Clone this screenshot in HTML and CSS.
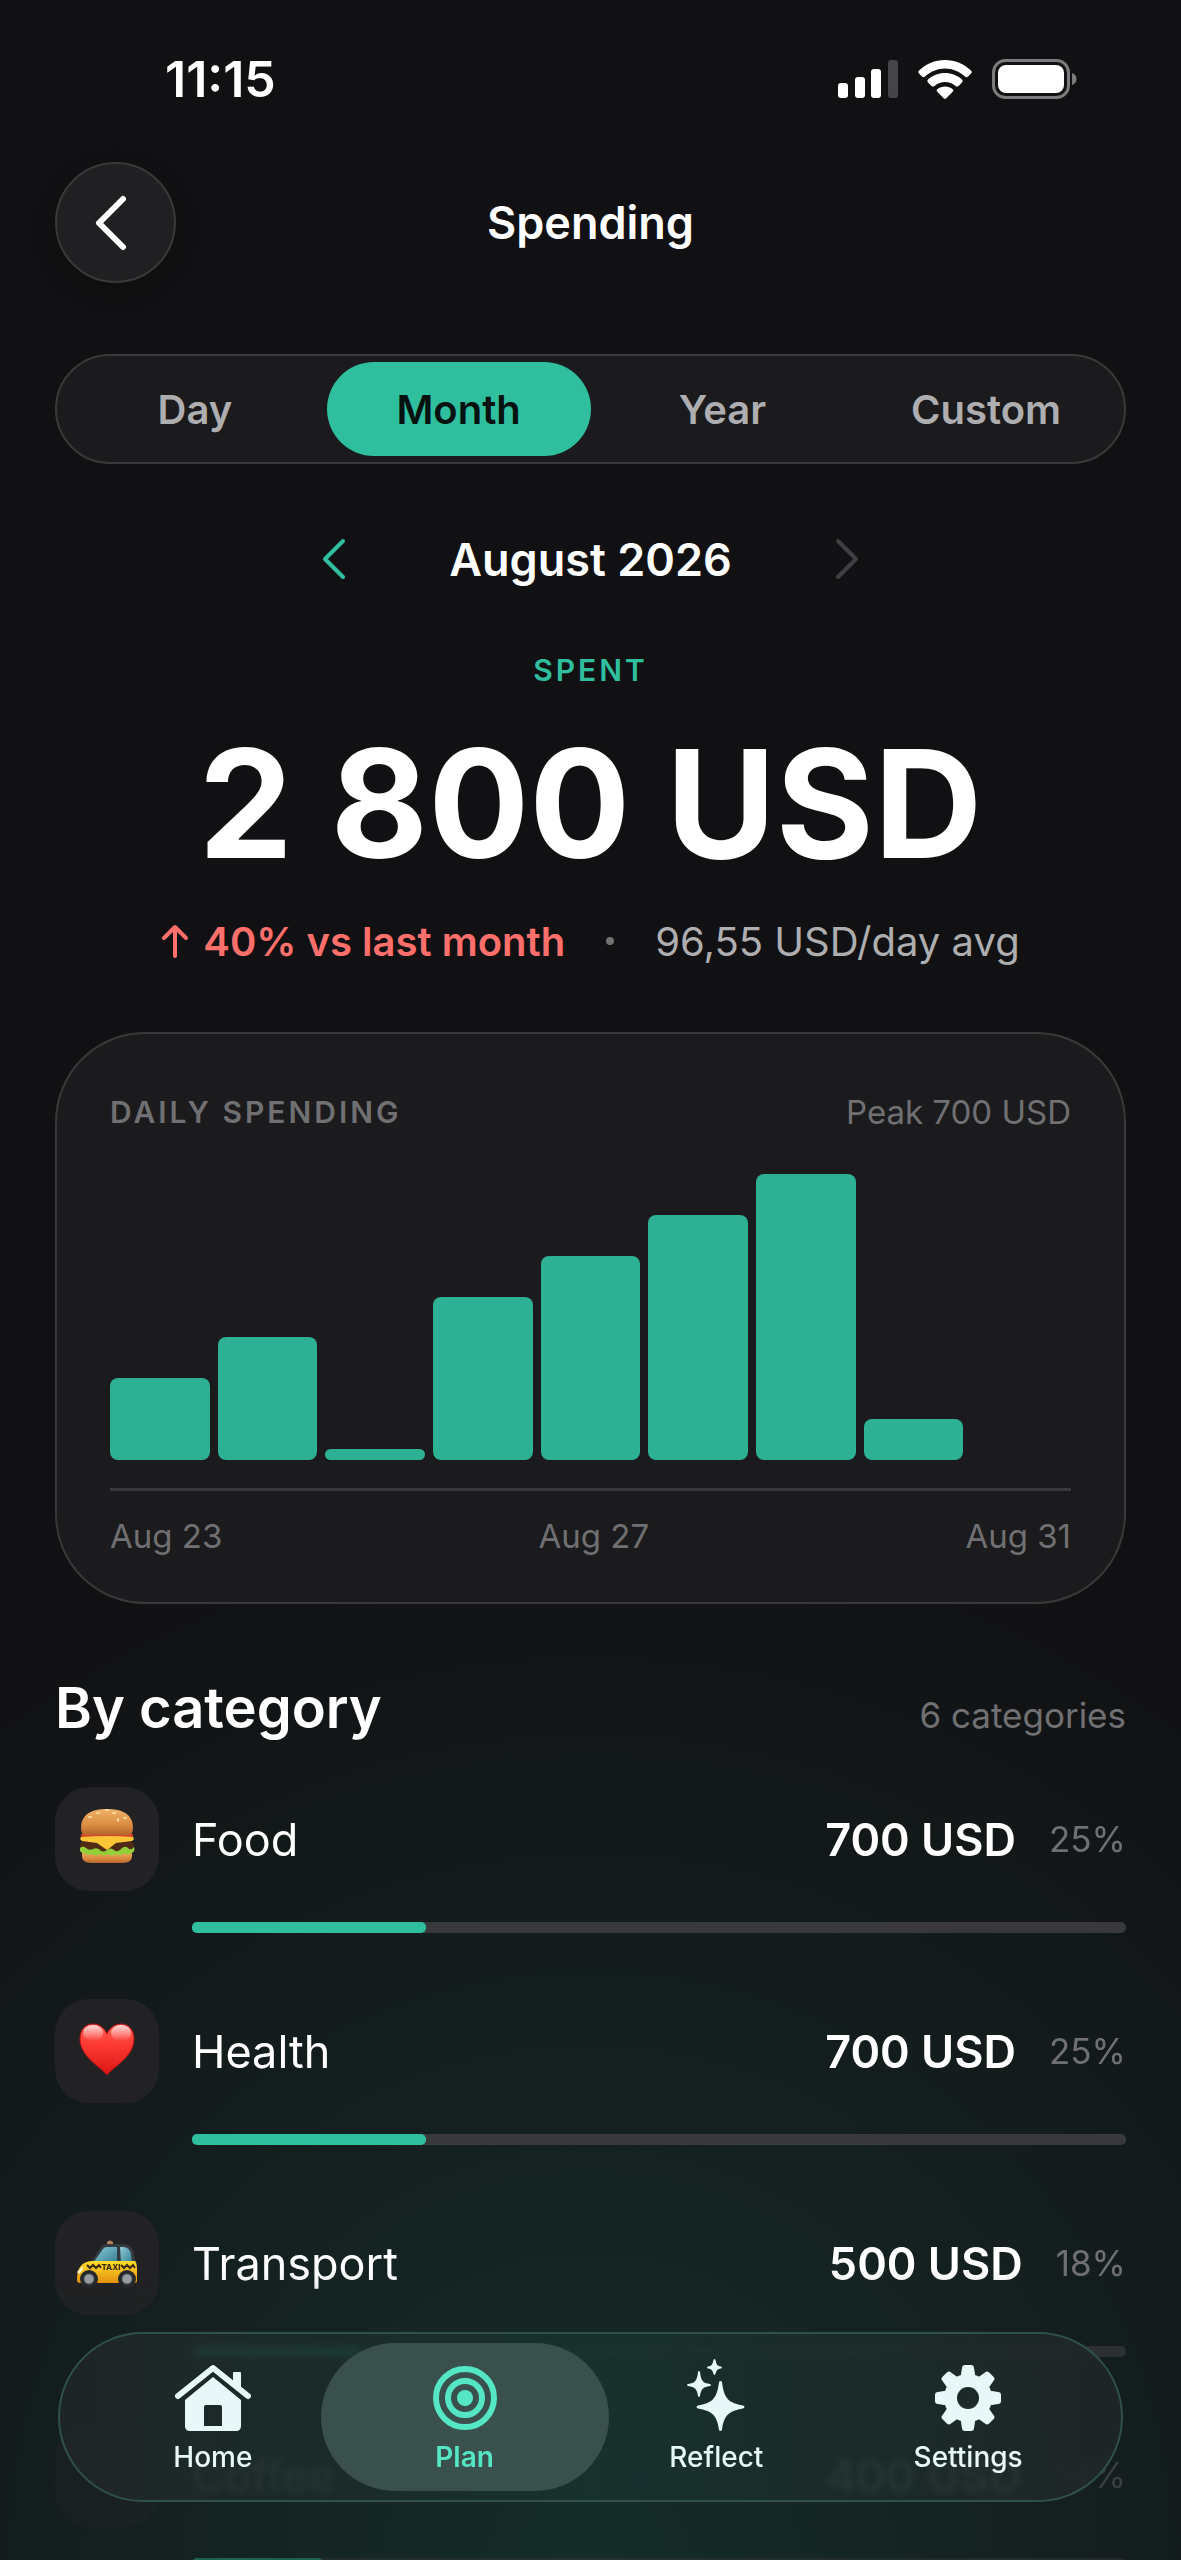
FILE: index.html
```html
<!DOCTYPE html>
<html lang="en">
<head>
    <meta charset="UTF-8">
    <meta name="viewport" content="width=device-width, initial-scale=1.0">
    <title>Spending</title>
    <link rel="stylesheet" href="styles.css">
</head>
<body>
    <div class="app">
        <div class="status-bar">
            <span class="time">11:15</span>
            <div class="status-icons">
                <svg width="60" height="38" viewBox="0 0 60 38" fill="#fff" aria-hidden="true">
                    <rect x="0" y="23" width="10" height="15" rx="3"/>
                    <rect x="17" y="17" width="10" height="21" rx="3"/>
                    <rect x="33" y="9" width="10" height="29" rx="3"/>
                    <rect x="50" y="0" width="10" height="38" rx="3" fill="#454547"/>
                </svg>
                <svg width="54" height="39" viewBox="0 0 54 39" fill="#fff" aria-hidden="true">
                    <path d="M27 0C37 0 46 4 53 10.500Q54.500 12 53 13.500L50 16.500Q48.500 18 47 16.500C41.500 11.500 34.500 8.500 27 8.500S12.500 11.500 7 16.500Q5.500 18 4 16.500L1 13.500Q-.5 12 1 10.500C8 4 17 0 27 0Z"/>
                    <path d="M27 13C33.500 13 39.500 15.500 44 19.500Q45.500 21 44 22.500L40.500 26Q39 27.200 37.500 26C34.500 23.500 31 22 27 22S19.500 23.500 16.500 26Q15 27.200 13.500 26L10 22.500Q8.500 21 10 19.500C14.500 15.500 20.500 13 27 13Z"/>
                    <path d="M27 26.500C30 26.500 32.500 27.500 34.700 29.300Q36 30.500 34.700 31.800L28.300 38.200Q27 39.400 25.700 38.200L19.300 31.800Q18 30.500 19.300 29.300C21.500 27.500 24 26.500 27 26.500Z"/>
                </svg>
                <svg width="86" height="40" viewBox="0 0 86 40" aria-hidden="true">
                    <rect x="1.500" y="1.500" width="75" height="37" rx="12" fill="none" stroke="#7b7b7d" stroke-width="3"/>
                    <rect x="6" y="6" width="66" height="28" rx="8" fill="#fff"/>
                    <path d="M80 14Q84.500 15.500 84.500 20T80 26Z" fill="#7b7b7d"/>
                </svg>
            </div>
        </div>

        <header class="top-bar">
            <button type="button" class="back-button" aria-label="Back">
                <svg width="34" height="56" viewBox="0 0 34 56" aria-hidden="true">
                    <path d="M29 4L5 28L29 52" fill="none" stroke="#fff" stroke-width="6" stroke-linecap="round" stroke-linejoin="round"/>
                </svg>
            </button>
            <h1 class="page-title">Spending</h1>
        </header>

        <main class="content">
            <div class="segmented">
                <button type="button" class="segment">Day</button>
                <button type="button" class="segment active">Month</button>
                <button type="button" class="segment">Year</button>
                <button type="button" class="segment">Custom</button>
            </div>

            <div class="period">
                <button type="button" class="period-arrow" aria-label="Previous month">
                    <svg width="26" height="42" viewBox="0 0 26 42" aria-hidden="true">
                        <path d="M22 3L4 21L22 39" fill="none" stroke="currentColor" stroke-width="4" stroke-linecap="round" stroke-linejoin="round"/>
                    </svg>
                </button>
                <span class="period-name">August 2026</span>
                <button type="button" class="period-arrow" aria-label="Next month" disabled>
                    <svg width="26" height="42" viewBox="0 0 26 42" aria-hidden="true">
                        <path d="M4 3L22 21L4 39" fill="none" stroke="currentColor" stroke-width="4" stroke-linecap="round" stroke-linejoin="round"/>
                    </svg>
                </button>
            </div>

            <section class="summary">
                <p class="summary-label">SPENT</p>
                <p class="summary-amount">2&#8197;800 USD</p>
                <div class="summary-details">
                    <span class="change">
                        <svg width="28" height="34" viewBox="0 0 28 34" aria-hidden="true">
                            <path d="M14 32V3M3 14L14 3L25 14" fill="none" stroke="currentColor" stroke-width="4" stroke-linecap="round" stroke-linejoin="round"/>
                        </svg>
                        40% vs last month
                    </span>
                    <span class="dot"></span>
                    <span class="average">96,55 USD/day avg</span>
                </div>
            </section>

            <section class="chart-card">
                <div class="chart-header">
                    <h2 class="chart-title">DAILY SPENDING</h2>
                    <span class="chart-peak">Peak 700 USD</span>
                </div>
                <div class="chart">
                    <div class="bar" style="height: 28.57%"></div>
                    <div class="bar" style="height: 42.86%"></div>
                    <div class="bar" style="height: 3.85%"></div>
                    <div class="bar" style="height: 57.14%"></div>
                    <div class="bar" style="height: 71.43%"></div>
                    <div class="bar" style="height: 85.71%"></div>
                    <div class="bar" style="height: 100%"></div>
                    <div class="bar" style="height: 14.29%"></div>
                    <div class="bar" style="height: 0%"></div>
                </div>
                <div class="chart-axis">
                    <span>Aug 23</span>
                    <span>Aug 27</span>
                    <span>Aug 31</span>
                </div>
            </section>

            <section class="categories">
                <div class="categories-header">
                    <h2 class="categories-title">By category</h2>
                    <span class="categories-count">6 categories</span>
                </div>
                <ul class="category-list">
                    <li class="category">
                        <div class="category-icon">
                            <svg width="58" height="58" viewBox="0 0 58 58" aria-hidden="true">
                                <defs>
                                    <linearGradient id="bun" x1="0" y1="0" x2="0" y2="1">
                                        <stop offset="0" stop-color="#f0b267"/>
                                        <stop offset=".6" stop-color="#db8d43"/>
                                        <stop offset="1" stop-color="#b5652a"/>
                                    </linearGradient>
                                </defs>
                                <path d="M4 43H54V48Q54 55 45 55H13Q4 55 4 48Z" fill="url(#bun)"/>
                                <rect x="2" y="33" width="54" height="11" rx="5" fill="#4f2a14"/>
                                <path d="M2 40Q5 37 8 40T15 41T22 42T29 42T36 42T43 41T50 40T56 39Q58 44 53 45Q50 48 46 45Q42 49 38 46Q34 49 30 46Q26 49 22 46Q18 49 14 46Q9 48 6 45Q1 45 2 40Z" fill="#93cf38"/>
                                <rect x="3" y="25" width="52" height="6" rx="3" fill="#d8432d"/>
                                <path d="M3 29Q29 27 55 29Q57 31 54 33L38 35L29 42L19 35L4 33Q1 31 3 29Z" fill="#fcc538"/>
                                <path d="M3 20C3 6 14 1 29 1S55 6 55 20Q55 27 50 27H8Q3 27 3 20Z" fill="url(#bun)"/>
                                <g fill="#fbe0a5">
                                    <ellipse cx="20" cy="5" rx="2" ry="1"/>
                                    <ellipse cx="29" cy="2" rx="2" ry="1"/>
                                    <ellipse cx="36" cy="5" rx="2" ry="1"/>
                                    <ellipse cx="40" cy="12" rx="1" ry="2"/>
                                    <ellipse cx="12" cy="9" rx="2" ry="1"/>
                                    <ellipse cx="47" cy="10" rx="2" ry="1"/>
                                </g>
                            </svg>
                        </div>
                        <span class="category-name">Food</span>
                        <span class="category-amount">700 USD</span>
                        <span class="category-share">25%</span>
                        <div class="track"><div class="fill" style="width: 25%"></div></div>
                    </li>
                    <li class="category">
                        <div class="category-icon">
                            <svg width="58" height="58" viewBox="0 0 58 58" aria-hidden="true">
                                <defs>
                                    <linearGradient id="heart" x1="0" y1="0" x2="0" y2="1">
                                        <stop offset="0" stop-color="#ff6258"/>
                                        <stop offset=".4" stop-color="#fd3a33"/>
                                        <stop offset="1" stop-color="#d91613"/>
                                    </linearGradient>
                                    <linearGradient id="shine" x1="0" y1="0" x2="0" y2="1">
                                        <stop offset="0" stop-color="#fff" stop-opacity=".75"/>
                                        <stop offset="1" stop-color="#fff" stop-opacity="0"/>
                                    </linearGradient>
                                </defs>
                                <path d="M29 55C23 47 2 37 2 19C2 9 8 4 15 4C22 4 27 9 29 14C31 9 36 4 43 4C50 4 56 9 56 19C56 37 35 47 29 55Z" fill="url(#heart)" stroke="#b81210"/>
                                <ellipse cx="15" cy="13" rx="10" ry="8" fill="url(#shine)"/>
                                <ellipse cx="43" cy="13" rx="10" ry="8" fill="url(#shine)"/>
                            </svg>
                        </div>
                        <span class="category-name">Health</span>
                        <span class="category-amount">700 USD</span>
                        <span class="category-share">25%</span>
                        <div class="track"><div class="fill" style="width: 25%"></div></div>
                    </li>
                    <li class="category">
                        <div class="category-icon">
                            <svg width="62" height="58" viewBox="0 0 62 58" aria-hidden="true">
                                <defs>
                                    <linearGradient id="taxi" x1="0" y1="0" x2="0" y2="1">
                                        <stop offset="0" stop-color="#ffde29"/>
                                        <stop offset="1" stop-color="#f0980e"/>
                                    </linearGradient>
                                    <linearGradient id="glass" x1="0" y1="0" x2="1" y2="1">
                                        <stop offset="0" stop-color="#8fcbd8"/>
                                        <stop offset="1" stop-color="#337f98"/>
                                    </linearGradient>
                                </defs>
                                <path d="M31 13V10Q34 7 37 10V13Z" fill="#b4835a"/>
                                <path d="M14 31L25 15Q27 12 31 12H46Q56 12 58 22L60 32Z" fill="#343b40"/>
                                <path d="M17 31L27 17Q28 15 31 15H41V31Z" fill="url(#glass)"/>
                                <path d="M44 15H47Q54 15 55 23L56 31H45Z" fill="url(#glass)"/>
                                <path d="M1 48C1 36 5 30 16 29H59Q61 31 61 38V49Q61 51 58 51H4Q1 51 1 48Z" fill="url(#taxi)"/>
                                <path d="M11 33L14 36L17 33L20 36L23 33L25 36M45 33L48 36L51 33L54 36L57 33L59 36" fill="none" stroke="#3a2c10" stroke-width="2"/>
                                <text x="35" y="38" class="taxi-sign">TAXI</text>
                                <path d="M1 40Q5 36 7 34Q8 38 3 42Z" fill="#fff6cf"/>
                                <g fill="#26292c">
                                    <circle cx="13" cy="47" r="9"/>
                                    <circle cx="51" cy="47" r="9"/>
                                </g>
                                <g fill="#9da4aa" stroke="#5f666c">
                                    <circle cx="13" cy="47" r="5"/>
                                    <circle cx="51" cy="47" r="5"/>
                                </g>
                            </svg>
                        </div>
                        <span class="category-name">Transport</span>
                        <span class="category-amount">500 USD</span>
                        <span class="category-share">18%</span>
                        <div class="track"><div class="fill" style="width: 18%"></div></div>
                    </li>
                    <li class="category">
                        <div class="category-icon"></div>
                        <span class="category-name">Coffee</span>
                        <span class="category-amount">400 USD</span>
                        <span class="category-share">14%</span>
                        <div class="track"><div class="fill" style="width: 14%"></div></div>
                    </li>
                </ul>
            </section>
        </main>

        <nav class="tab-bar">
            <a href="#home" class="tab">
                <svg width="76" height="68" viewBox="0 0 76 68" fill="currentColor" aria-hidden="true">
                    <path d="M3 32L38 4L73 32" fill="none" stroke="currentColor" stroke-width="6" stroke-linecap="round" stroke-linejoin="round"/>
                    <path d="M58 20V9Q58 8 59 8H65Q66 8 66 9V27Z"/>
                    <path fill-rule="evenodd" d="M38 13L66 36V62Q66 67 61 67H15Q10 67 10 62V36ZM31 41Q29 41 29 43V62H47V43Q47 41 45 41Z"/>
                </svg>
                Home
            </a>
            <a href="#plan" class="tab active" aria-current="page">
                <svg width="68" height="68" viewBox="0 0 68 68" aria-hidden="true">
                    <circle cx="34" cy="34" r="29" fill="none" stroke="currentColor" stroke-width="6"/>
                    <circle cx="34" cy="34" r="17" fill="none" stroke="currentColor" stroke-width="6"/>
                    <circle cx="34" cy="34" r="8" fill="currentColor"/>
                </svg>
                Plan
            </a>
            <a href="#reflect" class="tab">
                <svg width="60" height="74" viewBox="0 0 60 74" fill="currentColor" aria-hidden="true">
                    <path d="M33 24Q34.500 22 36 24C38 41 43 45 57 47.500Q60 49 57 50.500C43 53 38 57 36 72Q34.500 74 33 72C31 57 26 53 12 50.500Q9 49 12 47.500C26 45 31 41 33 24Z"/>
                    <path d="M12 14Q13 12 14 14C15 23 17 25 24 26Q26 27 24 28C17 29 15 31 14 38Q13 40 12 38C11 31 9 29 2 28Q0 27 2 26C9 25 11 23 12 14Z"/>
                    <path d="M27.500 2Q28.500 0 29.500 2C30.500 7 31.500 8 35 8.500Q37 9.500 35 10.500C31.500 11 30.500 12 29.500 16Q28.500 18 27.500 16C26.500 12 25.500 11 22 10.500Q20 9.500 22 8.500C25.500 8 26.500 7 27.500 2Z"/>
                </svg>
                Reflect
            </a>
            <a href="#settings" class="tab">
                <svg width="68" height="68" viewBox="0 0 68 68" fill="currentColor" aria-hidden="true">
                    <defs>
                        <mask id="gear-hole">
                            <rect width="68" height="68" fill="#fff"/>
                            <circle cx="34" cy="34" r="11" fill="#000"/>
                        </mask>
                        <path id="tooth" d="M26 16L28 4Q28 1 31 1H37Q40 1 40 4L42 16Z"/>
                    </defs>
                    <g mask="url(#gear-hole)">
                        <circle cx="34" cy="34" r="24"/>
                        <use href="#tooth"/>
                        <use href="#tooth" transform="rotate(45 34 34)"/>
                        <use href="#tooth" transform="rotate(90 34 34)"/>
                        <use href="#tooth" transform="rotate(135 34 34)"/>
                        <use href="#tooth" transform="rotate(180 34 34)"/>
                        <use href="#tooth" transform="rotate(225 34 34)"/>
                        <use href="#tooth" transform="rotate(270 34 34)"/>
                        <use href="#tooth" transform="rotate(315 34 34)"/>
                    </g>
                </svg>
                Settings
            </a>
        </nav>
    </div>
</body>
</html>
```
FILE: styles.css
```css
* {
    box-sizing: border-box;
}
body {
    margin: 0;
    background-color: #111113;
    color: #fff;
    font-family: Inter, "Liberation Sans", sans-serif;
    font-size: 45px;
}
h1, h2, p, ul {
    margin: 0;
    padding: 0;
}
button {
    border: none;
    background: none;
    padding: 0;
    font-family: inherit;
    cursor: pointer;
}
svg {
    display: block;
}
.app {
    height: 100vh;
    overflow: hidden;
    padding: 0 55px;
    background: radial-gradient(ellipse 90% 42% at 50% 100%, #152d2a 0%, #141e1e 50%, #111113 100%);
}

/* Status bar */
.status-bar {
    display: flex;
    justify-content: space-between;
    align-items: center;
    height: 162px;
    padding: 0 48px 4px 110px;
}
.time {
    font-size: 50px;
    font-weight: 600;
}
.status-icons {
    display: flex;
    align-items: center;
    gap: 20px;
}

/* Header */
.top-bar {
    display: grid;
    grid-template-columns: 121px 1fr 121px;
    align-items: center;
}
.back-button {
    display: flex;
    align-items: center;
    justify-content: center;
    width: 121px;
    height: 121px;
    padding-right: 10px;
    border: 2px solid #39393b;
    border-radius: 50%;
    background-color: #202022;
    box-shadow: 0 8px 24px rgba(0, 0, 0, 0.2);
}
.page-title {
    font-size: 45px;
    font-weight: 600;
    text-align: center;
}

/* Day / Month / Year / Custom */
.segmented {
    display: flex;
    height: 110px;
    margin-top: 71px;
    padding: 6px;
    border: 2px solid #39393b;
    border-radius: 55px;
    background-color: #1b1b1d;
}
.segment {
    flex: 1;
    border-radius: 47px;
    color: #aeaeb0;
    font-size: 40px;
    font-weight: 600;
}
.segment.active {
    background-color: #2fbf9f;
    color: #06120f;
}

.period {
    display: flex;
    justify-content: center;
    align-items: center;
    gap: 102px;
    height: 60px;
    margin-top: 65px;
}
.period-arrow {
    color: #2fbf9f;
}
.period-arrow:disabled {
    color: #404042;
}
.period-name {
    font-size: 45px;
    font-weight: 600;
}

/* Total */
.summary {
    margin-top: 61px;
    text-align: center;
}
.summary-label {
    color: #2fbf9f;
    font-size: 30px;
    font-weight: 600;
    line-height: 40px;
    letter-spacing: 3px;
}
.summary-amount {
    margin-top: 24px;
    font-size: 150px;
    font-weight: 700;
    line-height: 180px;
}
.summary-details {
    display: flex;
    justify-content: center;
    align-items: center;
    gap: 41px;
    height: 60px;
    margin-top: 17px;
    font-size: 40px;
}
.change {
    display: flex;
    align-items: center;
    gap: 14px;
    color: #ff6f6c;
    font-weight: 600;
}
.dot {
    width: 8px;
    height: 8px;
    border-radius: 50%;
    background-color: #707072;
}
.average {
    color: #aeaeb0;
}

/* Chart */
.chart-card {
    margin-top: 61px;
    padding: 58px 53px 46px;
    border: 2px solid #39393b;
    border-radius: 90px;
    background-color: #1b1b1d;
    color: #707072;
    font-size: 33px;
}
.chart-header {
    display: flex;
    justify-content: space-between;
    align-items: center;
    height: 40px;
}
.chart-title {
    font-size: 30px;
    font-weight: 600;
    letter-spacing: 3px;
}
.chart {
    display: flex;
    align-items: flex-end;
    gap: 8px;
    height: 286px;
    margin-top: 42px;
}
.bar {
    flex: 1;
    border-radius: 8px;
    background-color: #2db094;
}
.chart-axis {
    display: flex;
    justify-content: space-between;
    margin-top: 28px;
    padding-top: 25px;
    border-top: 3px solid #39393b;
    line-height: 40px;
}

/* Categories */
.categories-header {
    display: flex;
    justify-content: space-between;
    align-items: baseline;
    margin-top: 68px;
    line-height: 72px;
}
.categories-title {
    font-size: 56px;
    font-weight: 600;
}
.categories-count {
    color: #707072;
    font-size: 35px;
}
.category-list {
    margin-top: 36px;
    list-style: none;
    -webkit-mask-image: linear-gradient(#000 0, #000 480px, rgba(0, 0, 0, 0.4) 640px);
    mask-image: linear-gradient(#000 0, #000 480px, rgba(0, 0, 0, 0.4) 640px);
}
.category {
    display: grid;
    grid-template-columns: 104px 1fr auto auto;
    column-gap: 33px;
    row-gap: 31px;
    align-items: center;
    margin-bottom: 66px;
}
.category-icon {
    display: flex;
    align-items: center;
    justify-content: center;
    height: 104px;
    padding-bottom: 4px;
    border-radius: 34px;
    background-color: #222224;
}
.taxi-sign {
    fill: #3a2c10;
    font-size: 8px;
    font-weight: 800;
    text-anchor: middle;
}
.category-name {
    font-size: 45px;
}
.category-amount {
    font-size: 45px;
    font-weight: 600;
}
.category-share {
    color: #707072;
    font-size: 35px;
}
.track {
    grid-column: 2 / -1;
    height: 11px;
    border-radius: 5px;
    background-color: #39393b;
}
.fill {
    height: 100%;
    border-radius: 5px;
    background-color: #2fbf9f;
}

/* Tab bar */
.tab-bar {
    position: fixed;
    right: 58px;
    bottom: 58px;
    left: 58px;
    display: flex;
    height: 170px;
    padding: 9px;
    border: 2px solid #2f504d;
    border-radius: 85px;
    background: linear-gradient(90deg, rgba(32, 38, 41, 0.88), rgba(24, 50, 46, 0.88) 50%, rgba(32, 38, 41, 0.88));
    -webkit-backdrop-filter: blur(3px);
    backdrop-filter: blur(3px);
}
.tab {
    display: flex;
    flex: 1;
    flex-direction: column;
    align-items: center;
    justify-content: flex-end;
    gap: 8px;
    padding-bottom: 17px;
    border-radius: 74px;
    color: #e8f8f8;
    font-size: 28px;
    font-weight: 500;
    line-height: 34px;
    text-decoration: none;
}
.tab + .tab {
    margin-left: -36px;
}
.tab.active {
    background-color: #3a504d;
    color: #55e6c5;
    font-weight: 600;
}
```
